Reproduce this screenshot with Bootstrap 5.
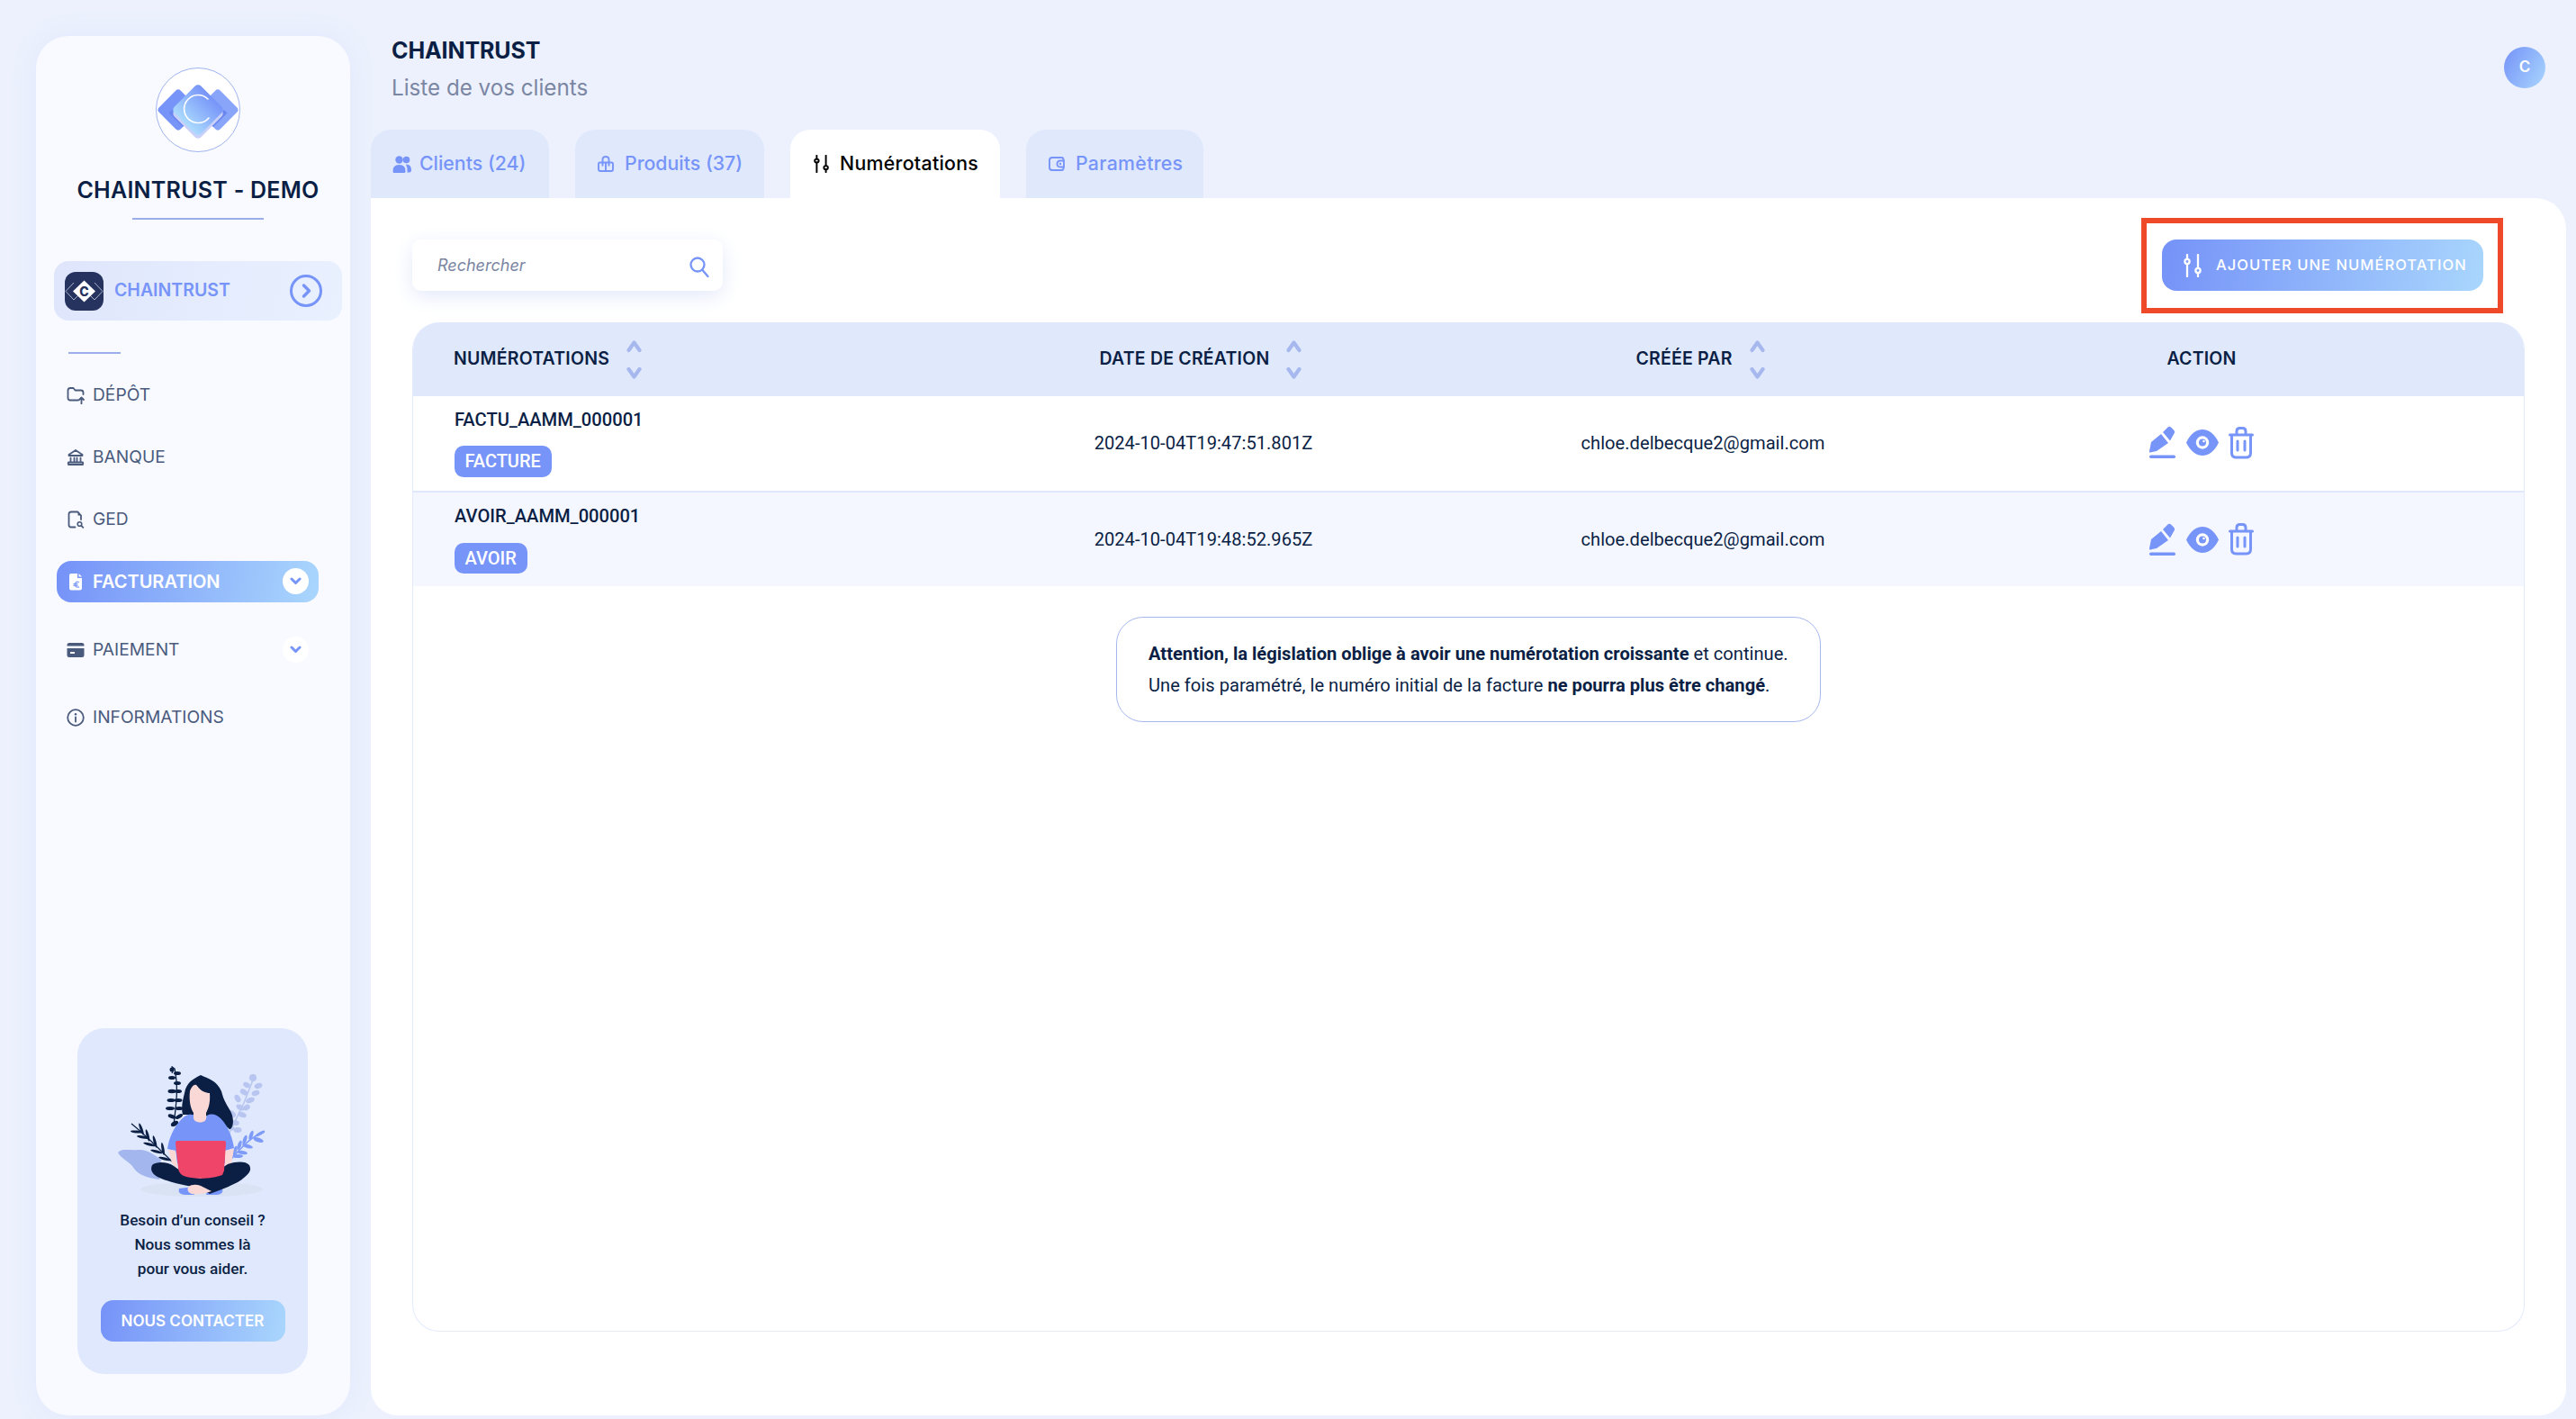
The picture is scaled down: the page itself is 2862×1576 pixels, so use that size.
<!doctype html>
<html lang="fr">
<head>
<meta charset="utf-8">
<title>Chaintrust</title>
<link href="https://cdn.jsdelivr.net/npm/bootstrap@5.3.0/dist/css/bootstrap.min.css" rel="stylesheet">
<style>
:root{--accent:#7794f8;--navy:#0b1f45;--grad:linear-gradient(100deg,#7592f8,#a9d6fd);--pale:#e0e9fc}
html,body{height:1576px;overflow:hidden}
body{background:#ecf1fd;font-family:"Inter","Liberation Sans",sans-serif;color:var(--navy)}
.shell{height:1576px}
/* sidebar */
.side{width:349px;flex:none;margin:40px 0 4px 40px;padding-top:35px;background:#f9faff;border-radius:36px;box-shadow:0 0 30px #e1e8fb}
.side-brand{padding-left:11px}
.side-logo{width:94px;height:94px;display:block;margin:0 auto}
.side-title{margin:23px 0 0;font-size:25px;line-height:39px;font-weight:600;text-align:center;letter-spacing:.25px;color:var(--navy)}
.side-rule{height:2px;background:#9aaeea;width:146px;margin:11px auto 0}
.org{margin:46px 9px 0 20px;height:66px;padding:0 22px 0 12px;border-radius:16px;background:linear-gradient(100deg,#dfe6fc,#e9f1ff);color:var(--accent);font-size:19.5px;font-weight:600;letter-spacing:0}
.org-pic{width:43px;height:43px;border-radius:12px;background:#27335f;flex:none;margin-right:12px;display:block}
.org-go{width:36px;height:36px;margin-left:auto;display:block}
.side-sep{width:58px;height:2px;background:#9aaeea;margin:35px 0 0 36px}
.side-nav{margin:22.5px 0 0 23px;width:291px;gap:23px}
.side-item{height:46px;padding:0 11.5px 0 11px;gap:9px;font-size:19.2px;color:#4a5a7d;border-radius:16px;text-decoration:none}
.side-item svg.ico{width:20px;height:20px;flex:none}
.side-item.on{background:var(--grad);color:#fff;font-weight:600;font-size:20px}
.side-item.low1{margin-top:7px}
.side-item.low2{margin-top:6px}
.chev{width:29px;height:29px;margin-left:auto;background:#fff;border-radius:50%;flex:none}
.chev svg{width:13px;height:9px}
.help{width:256px;height:384px;margin:auto 0 46px 46px;padding-top:28px;background:#dfe8fc;border-radius:30px;text-align:center}
.help-art{width:190px;height:170px;display:block;margin:0 auto}
.help-txt{margin:2px 0 0;font:500 17.2px/27px "Roboto",sans-serif;color:var(--navy)}
.help-btn{width:205px;height:46px;margin-top:21px;padding:0;border:0;border-radius:14px;background:var(--grad);color:#fff;font-size:17px;font-weight:600;line-height:46px}
/* main */
.main{flex:1 1 0;min-width:0;margin-left:23px;margin-right:11px}
.head{height:144px;padding:38px 23px 0 23px}
.head-title{margin:0;font-size:25px;line-height:36px;font-weight:700;letter-spacing:-.1px;color:var(--navy)}
.head-sub{margin:6px 0 0;font-size:24.2px;line-height:36px;color:#7b86a3}
.avatar{width:46px;height:46px;margin-top:14px;border-radius:50%;background:linear-gradient(120deg,#7592f8,#a9d6fd);color:#fff;font-size:17px;font-weight:600}
.tabs{gap:29px;height:76px}
.tab-a{height:76px;flex:none;border-radius:22px 22px 0 0;background:var(--pale);color:var(--accent);font-size:21.3px;font-weight:500;text-decoration:none}
.tab-a svg{flex:none;display:block}
.tab-a.on{background:#fff;color:#000}
.tab-c{width:198px;padding-left:24px;gap:9px}
.tab-p{width:210px;padding-left:25px;gap:12px}
.tab-n{width:233px;padding-left:26px;gap:12px;letter-spacing:.3px}
.tab-r{width:197px;padding-left:25px;gap:12px;letter-spacing:.3px}
.panel{height:1352px;padding:46px 46px 0;background:#fff;border-radius:0 34px 30px 30px}
.search{width:345px;height:57px;border-radius:10px;background:#fff;box-shadow:0 6px 22px #e3e9fa;padding:0 15px 0 28px}
.search input{border:0;padding:0;height:40px;background:transparent;font-style:italic;font-size:18px;color:#7b86a3;box-shadow:none}
.search input::placeholder{color:#7b86a3;opacity:1}
.search svg{width:22px;height:23px;flex:none;margin-top:3px}
.add-wrap{margin-right:46px}
.add-btn{width:357px;height:57px;padding:0 0 0 24px;gap:16px;border:0;border-radius:16px;background:var(--grad);color:#fff;font-size:16.5px;font-weight:500;letter-spacing:1.05px}
.add-btn svg{width:20px;height:26px;flex:none}
.add-btn:hover{color:#fff;background:var(--grad)}
.callout{position:absolute;left:-23px;right:-22px;top:-24px;bottom:-25px;border:6px solid #ee4a2a;pointer-events:none}
.sheet{height:1121px;margin-top:35px;border:1px solid #e3eafc;border-top:0;border-radius:30px;overflow:hidden}
.num-table{table-layout:fixed;width:100%;margin:0}
.num-table.table>:not(caption)>*>*{padding:0;border-bottom:0;background:transparent;box-shadow:none;color:var(--navy)}
.num-table.table>thead>tr>th{height:82px;background:var(--pale);font-size:19.5px;font-weight:600;text-align:center;vertical-align:middle;letter-spacing:.2px}
.num-table.table>thead>tr>th:first-child{text-align:left;padding-left:45px}
.num-table.table>tbody>tr>td{font:400 20.15px/26px "Roboto",sans-serif;text-align:center;vertical-align:middle}
.num-table.table>tbody>tr>td:first-child{text-align:left;padding-left:46px;font-weight:500;vertical-align:top}
.num-table.table>tbody>tr>td:last-child,.num-table.table>thead>tr>th:last-child{padding-right:23px}
.num-table.table>tbody>tr.r1>td{height:106px;border-bottom:2px solid var(--pale)}
.num-table.table>tbody>tr.r1>td:not(:first-child){padding-bottom:2px}
.num-table.table>tbody>tr.r2>td{height:105px;background:#f4f7ff}
.w1{width:542px}.w2{width:672px}.w3{width:438px}
.th-in{gap:19px;padding-right:6px}
.sorter{width:17px;height:45px;display:block;flex:none}
.num-name{padding-top:13px}
.num-tag{display:inline-block;margin-top:16px;height:35px;padding:0 12px 0 11.5px;border-radius:10px;background:var(--accent);color:#fff;font:500 20px/35px "Roboto",sans-serif}
.num-tag.t2{height:34px;line-height:34px;margin-top:17px}
.acts{gap:11px}
.acts svg{display:block;flex:none}
.note{width:783px;height:117px;margin:34px auto 0;padding:0 35px;border:1px solid #a6b8ee;border-radius:30px;font:400 20.15px/35px "Roboto",sans-serif;color:var(--navy)}
.note b{font-weight:700}
</style>
</head>
<body>
<svg width="0" height="0" class="position-absolute">
  <defs>
    <linearGradient id="lg" x1="0.5" y1="0" x2="0.5" y2="1"><stop offset="0" stop-color="#7794f8"/><stop offset="1" stop-color="#aadafe"/></linearGradient>
    <symbol id="down" viewBox="0 0 13 9"><path d="M2 2l4.500 4.500L11 2" fill="none" stroke="#7794f8" stroke-width="3" stroke-linecap="round" stroke-linejoin="round"/></symbol>
    <symbol id="sort" viewBox="0 0 17 45"><path d="M2.500 12L8.500 3.500l6 8.500M2.500 33L8.500 41.500l6-8.500" fill="none" stroke="#a6b8ee" stroke-width="4.200" stroke-linecap="round" stroke-linejoin="round"/></symbol>
    <symbol id="sliders" viewBox="0 0 20 26"><g fill="none" stroke="currentColor" stroke-width="2.300" stroke-linecap="round"><path d="M4 1v5M4 11v14M16 1v15M16 21v4"/><circle cx="4" cy="8.500" r="2.600"/><circle cx="16" cy="18.500" r="2.600"/></g></symbol>
    <symbol id="pen" viewBox="0 0 30 37"><path fill="#7794f8" d="M13 9l8 10-13 9-7 1.500q-1.500 0-1-1.500l2-10zM15 7l5-5q2-2 4-.5l3 3q2 2 .5 4L23 16.500z"/><rect y="32.500" width="29" height="3.500" rx="1.700" fill="#7794f8"/></symbol>
    <symbol id="eye" viewBox="0 0 36 29"><path fill="#7794f8" d="M0 14.500C5 4 12 0 18 0s13 4 18 14.500C31 25 24 29 18 29S5 25 0 14.500z"/><circle cx="18" cy="14.500" r="7.200" fill="#fff"/><circle cx="18" cy="14.500" r="4" fill="#7794f8"/><circle cx="19.500" cy="13" r="1.300" fill="#fff"/></symbol>
    <symbol id="trash" viewBox="0 0 28 36"><g fill="none" stroke="#7794f8" stroke-width="3" stroke-linecap="round" stroke-linejoin="round"><path d="M1.500 9h25M9 8V5q0-3.500 3.500-3.500h3Q19 1.500 19 5v3M3.500 10v19q0 5 5 5h11q5 0 5-5V10M10 16v10M18 16v10"/></g></symbol>
  </defs>
</svg>
<div class="shell d-flex">
  <aside class="side d-flex flex-column">
    <div class="side-brand">
      <svg class="side-logo" viewBox="0 0 94 94">
        <circle cx="47" cy="47" r="46.500" fill="#fff" stroke="#9fb3ee" stroke-width="1"/>
        <rect x="8" y="30" width="34" height="34" rx="4" transform="rotate(45 25 47)" fill="#7794f8"/>
        <rect x="52" y="30" width="34" height="34" rx="4" transform="rotate(45 69 47)" fill="#88a5f9"/>
        <path d="M18 47L33.500 62.500 30 66 14.500 50.500zM76 47L60.500 62.500 64 66 79.500 50.500z" fill="#6a86ef"/>
        <rect x="26" y="30" width="42" height="42" rx="5" transform="rotate(45 47 51)" fill="#c9d0f9"/>
        <rect x="26" y="26" width="42" height="42" rx="5" transform="rotate(45 47 47)" fill="url(#lg)"/>
        <path d="M58 35A15.500 15.500 0 1 0 59 56" fill="none" stroke="#fff" stroke-width="1.600" stroke-linecap="round"/>
      </svg>
      <h1 class="side-title">CHAINTRUST - DEMO</h1>
      <div class="side-rule"></div>
    </div>
    <div class="org d-flex align-items-center">
      <svg class="org-pic" viewBox="0 0 43 43">
        <g fill="none" stroke="#aab3cf" stroke-width="1"><path d="M10 12L1 21.500 10 31l6-6M33 12l9 9.500L33 31l-6-6"/></g>
        <path d="M21.500 9.500L34 21.500 21.500 33.500 9 21.500z" fill="#fff"/>
        <text x="21.500" y="26.500" text-anchor="middle" font-family="Inter" font-weight="800" font-size="14" fill="#27335f">C</text>
      </svg>
      <span>CHAINTRUST</span>
      <svg class="org-go" viewBox="0 0 36 36"><circle cx="18" cy="18" r="16.500" fill="none" stroke="#7794f8" stroke-width="3"/><path d="M15.500 12l6 6-6 6" fill="none" stroke="#7794f8" stroke-width="3.500" stroke-linecap="round" stroke-linejoin="round"/></svg>
    </div>
    <div class="side-sep"></div>
    <nav class="nav flex-column side-nav">
      <a class="side-item d-flex align-items-center" href="#">
        <svg class="ico" viewBox="0 0 20 20"><path d="M13 15.500H4q-2.500 0-2.500-2.500V4.500Q1.500 2 4 2h3.500l2 2.500H16q2.500 0 2.500 2.500v2" fill="none" stroke="#4a5a7d" stroke-width="1.800" stroke-linecap="round" stroke-linejoin="round"/><path d="M16.500 19.500v-6M14 15l2.500-2.500L19 15" fill="none" stroke="#4a5a7d" stroke-width="1.800" stroke-linecap="round" stroke-linejoin="round"/></svg>
        <span>DÉPÔT</span>
      </a>
      <a class="side-item d-flex align-items-center" href="#">
        <svg class="ico" viewBox="0 0 20 20"><g fill="none" stroke="#4a5a7d" stroke-width="1.800" stroke-linejoin="round" stroke-linecap="round"><path d="M2.500 7L10 2l7.500 5v1h-15zM4.500 10.500v4M8.500 10.500v4M11.500 10.500v4M15.500 10.500v4M2 15.500h16q.5 1 0 2.500H2q-.5-1.500 0-2.500z"/></g></svg>
        <span>BANQUE</span>
      </a>
      <a class="side-item d-flex align-items-center" href="#">
        <svg class="ico" viewBox="0 0 20 20"><path d="M9.500 18.500H5q-2.500 0-2.500-2.500V4Q2.500 1.500 5 1.500h7.500L16 5.500V10" fill="none" stroke="#4a5a7d" stroke-width="1.800" stroke-linecap="round" stroke-linejoin="round"/><path d="M12.500 1.500v4H16z" fill="#4a5a7d"/><circle cx="14.500" cy="15" r="2.300" fill="none" stroke="#4a5a7d" stroke-width="1.600"/><path d="M16.300 16.800l2 2" stroke="#4a5a7d" stroke-width="1.800" stroke-linecap="round"/></svg>
        <span>GED</span>
      </a>
      <a class="side-item on d-flex align-items-center" href="#">
        <svg class="ico" viewBox="0 0 20 20"><path d="M5 1h7v5h5v11q0 2.500-2.500 2.500h-9.500Q3 19.500 3 17V3q0-2 2-2zM13.500 1L17 4.500h-3.500z" fill="#fff"/><path d="M13.500 10.500q-3-1.500-4 2-1 4 4 3.500M8 12.500h4M8 14.300h4" fill="none" stroke="#7f9bf9" stroke-width="1.300" stroke-linecap="round"/></svg>
        <span>FACTURATION</span>
        <span class="chev d-flex align-items-center justify-content-center"><svg><use href="#down"/></svg></span>
      </a>
      <a class="side-item low1 d-flex align-items-center" href="#">
        <svg class="ico" viewBox="0 0 20 20"><path d="M3 2h14q2.500 0 2.500 2.500v1H.5v-1Q.5 2 3 2zM.5 8h19v7.500q0 2.500-2.500 2.500H3q-2.500 0-2.500-2.500zM4 12v2h5v-2z" fill="#4a5a7d" fill-rule="evenodd"/></svg>
        <span>PAIEMENT</span>
        <span class="chev d-flex align-items-center justify-content-center"><svg><use href="#down"/></svg></span>
      </a>
      <a class="side-item low2 d-flex align-items-center" href="#">
        <svg class="ico" viewBox="0 0 20 20"><circle cx="10" cy="10" r="8.800" fill="none" stroke="#4a5a7d" stroke-width="1.800"/><circle cx="10" cy="6.300" r="1.200" fill="#4a5a7d"/><path d="M10 9.500v5" stroke="#4a5a7d" stroke-width="1.800" stroke-linecap="round"/></svg>
        <span>INFORMATIONS</span>
      </a>
    </nav>
    <div class="help">
      <svg class="help-art" viewBox="0 0 190 170">
        <ellipse cx="105" cy="151" rx="68" ry="8" fill="#d9e3f3"/>
        <path d="M12 110C16 105 26 108 34 107C44 106 52 112 60 118C58 128 60 134 58 140C46 138 36 136 30 128C26 120 16 118 12 110Z" fill="#a3b7ee"/>
        <g fill="#b7c5f0">
          <path d="M163 27L152 55 135 90" fill="none" stroke="#b7c5f0" stroke-width="1.500"/>
          <circle cx="162" cy="27" r="4"/>
          <ellipse cx="168" cy="36" rx="4.500" ry="3" transform="rotate(-20 168 36)"/><ellipse cx="155" cy="35" rx="4" ry="2.800" transform="rotate(30 155 35)"/>
          <ellipse cx="165" cy="44" rx="4.500" ry="3" transform="rotate(-20 165 44)"/><ellipse cx="152" cy="43" rx="4.500" ry="3" transform="rotate(30 152 43)"/>
          <ellipse cx="159" cy="52" rx="5" ry="3" transform="rotate(-20 159 52)"/><ellipse cx="145" cy="50" rx="4.500" ry="3" transform="rotate(60 145 50)"/>
          <ellipse cx="148" cy="60" rx="5" ry="3" transform="rotate(30 148 60)"/><ellipse cx="155" cy="60" rx="4" ry="3" transform="rotate(-30 155 60)"/>
          <ellipse cx="150" cy="68" rx="5" ry="3" transform="rotate(20 150 68)"/><ellipse cx="139" cy="67" rx="4.500" ry="3" transform="rotate(40 139 67)"/>
          <ellipse cx="142" cy="77" rx="5" ry="3" transform="rotate(10 142 77)"/><ellipse cx="137" cy="82" rx="5" ry="3" transform="rotate(30 137 82)"/>
          <ellipse cx="145" cy="85" rx="4.500" ry="3"/>
        </g>
        <g fill="#7f9bf8">
          <path d="M175 87C160 92 150 104 138 117" fill="none" stroke="#7f9bf8" stroke-width="1.500"/>
          <ellipse cx="168" cy="96" rx="6" ry="2.500" transform="rotate(20 168 96)"/><ellipse cx="160" cy="91" rx="5.500" ry="2" transform="rotate(-70 160 91)"/>
          <ellipse cx="156" cy="103" rx="6" ry="2" transform="rotate(15 156 103)"/><ellipse cx="153" cy="96" rx="5.500" ry="2" transform="rotate(-70 153 96)"/>
          <ellipse cx="150" cy="110" rx="6" ry="2" transform="rotate(10 150 110)"/><ellipse cx="147" cy="102" rx="5.500" ry="2" transform="rotate(-70 147 102)"/>
          <ellipse cx="145" cy="114" rx="6" ry="2"/><ellipse cx="142" cy="108" rx="5.500" ry="2" transform="rotate(-70 142 108)"/>
          <ellipse cx="170" cy="89" rx="6" ry="1.800" transform="rotate(-30 170 89)"/>
        </g>
        <g fill="#0b1f45">
          <path d="M72 22C76 16 68 12 75 17C80 40 76 60 74 80" fill="none" stroke="#0b1f45" stroke-width="1.300"/>
          <circle cx="72" cy="18" r="2.500"/>
          <ellipse cx="72" cy="27" rx="4" ry="2"/><ellipse cx="78" cy="22" rx="4" ry="2"/>
          <ellipse cx="78" cy="33" rx="4" ry="2"/><ellipse cx="72" cy="42" rx="4.500" ry="2.200"/><ellipse cx="79" cy="42" rx="4" ry="2"/>
          <ellipse cx="71" cy="52" rx="4.500" ry="2"/><ellipse cx="79" cy="52" rx="4.500" ry="2"/>
          <ellipse cx="70" cy="61" rx="5" ry="2"/><ellipse cx="80" cy="61" rx="4.500" ry="2"/>
          <ellipse cx="72" cy="70" rx="4.500" ry="2.200" transform="rotate(20 72 70)"/><ellipse cx="80" cy="70" rx="4.500" ry="2" transform="rotate(-30 80 70)"/>
          <ellipse cx="75" cy="78" rx="4.500" ry="2.500" transform="rotate(-30 75 78)"/>
        </g>
        <g fill="#0b1f45">
          <path d="M27 78C42 90 56 104 72 120" fill="none" stroke="#0b1f45" stroke-width="1.300"/>
          <ellipse cx="33" cy="87" rx="7" ry="1.500" transform="rotate(5 33 87)"/><ellipse cx="38" cy="84" rx="7" ry="1.500" transform="rotate(70 38 84)"/>
          <ellipse cx="40" cy="93" rx="7" ry="1.500" transform="rotate(10 40 93)"/><ellipse cx="45" cy="91" rx="7" ry="1.500" transform="rotate(75 45 91)"/>
          <ellipse cx="47" cy="101" rx="7" ry="1.500" transform="rotate(15 47 101)"/><ellipse cx="53" cy="98" rx="7" ry="1.500" transform="rotate(75 53 98)"/>
          <ellipse cx="55" cy="109" rx="7" ry="1.500" transform="rotate(15 55 109)"/><ellipse cx="62" cy="106" rx="7" ry="1.500" transform="rotate(80 62 106)"/>
          <ellipse cx="64" cy="117" rx="7" ry="1.500" transform="rotate(15 64 117)"/>
        </g>
        <path d="M104 24C112 28 122 30 127 42C130 54 134 58 138 66C142 76 139 84 136 84L120 70 88 68 84 68C82 60 84 52 86 44C88 32 96 28 104 24Z" fill="#0b1f45"/>
        <path d="M80 150Q78 156 86 157L97 157 97 148zM128 150Q130 156 122 157L110 157 112 148z" fill="#7794f8"/>
        <path d="M86 70C92 66 97 68 97 70C99 77 109 77 111 69C116 66 122 68 126 72C134 80 139 92 141 105L131 108 131 122 78 122 76 108 67 106C69 92 76 78 86 70Z" fill="#7794f8"/>
        <path d="M92 42C94 36 98 33 100 36C104 42 110 44 114 44C115 56 112 62 110 66L110 72C110 78 97 78 96 72L96 66C92 60 91 50 92 42Z" fill="#f9d8d6"/>
        <path d="M68 107L76 108 78 130 72 122zM131 108L141 106 138 122 131 130z" fill="#f9d8d6"/>
        <path d="M50 124C56 119 68 121 74 125C82 131 90 136 115 142L112 153C96 147 80 146 66 141C56 138 46 133 50 124Z" fill="#0b1f45"/>
        <path d="M158 124C154 119 142 120 134 123C126 128 118 136 92 142L114 156C130 150 146 144 152 138C160 132 160 128 158 124Z" fill="#0b1f45"/>
        <path d="M90 148Q96 144 104 147L116 153Q104 157 94 156Q88 154 90 148Z" fill="#f9d8d6"/>
        <path d="M78 97Q76 97 76 100L79 128Q80 135 88 137C100 140 118 139 128 135L130 130 132 100Q132 97 130 97Z" fill="#ee4569"/>
      </svg>
      <p class="help-txt">Besoin d’un conseil ?<br>Nous sommes là<br>pour vous aider.</p>
      <button class="btn help-btn" type="button">NOUS CONTACTER</button>
    </div>
  </aside>
  <main class="main d-flex flex-column">
    <header class="head d-flex justify-content-between align-items-start">
      <div>
        <h2 class="head-title">CHAINTRUST</h2>
        <p class="head-sub">Liste de vos clients</p>
      </div>
      <div class="avatar d-flex align-items-center justify-content-center">C</div>
    </header>
    <div class="tabs d-flex">
      <a class="tab-a tab-c d-flex align-items-center" href="#">
        <svg width="21" height="19" viewBox="0 0 21 19"><circle cx="7.500" cy="4.500" r="4.200" fill="#7794f8"/><circle cx="15.500" cy="4.500" r="3.800" fill="#7794f8"/><path d="M.5 17.500q-.5-7.500 7-7.500t7 7.500q0 1.500-1.500 1.500H2q-1.500 0-1.500-1.500zM15 9.500q6 0 6 6 0 3-2 3h-2.500q.5-5-1.500-9z" fill="#7794f8"/></svg>
        <span>Clients (24)</span>
      </a>
      <a class="tab-a tab-p d-flex align-items-center" href="#">
        <svg width="18" height="18" viewBox="0 0 18 18"><g fill="none" stroke="#7794f8" stroke-width="1.900" stroke-linejoin="round"><path d="M2.500 7.500h13q1.500 0 1.500 1.500v6q0 2-2 2H3q-2 0-2-2V9q0-1.500 1.500-1.500zM5.500 7.500V4q0-3 3.500-3t3.500 3v3.500M5.500 7.500v4M12.500 7.500v4M9 7.500v9.500"/></g></svg>
        <span>Produits (37)</span>
      </a>
      <a class="tab-a tab-n on d-flex align-items-center" href="#">
        <svg width="17" height="20" viewBox="0 0 20 26" preserveAspectRatio="none"><use href="#sliders"/></svg>
        <span>Numérotations</span>
      </a>
      <a class="tab-a tab-r d-flex align-items-center" href="#">
        <svg width="18" height="16" viewBox="0 0 18 16"><g fill="none" stroke="#7794f8" stroke-width="1.900"><path d="M16.500 4V3q0-2-2-2H4Q1 1 1 4v8q0 3 3 3h10.500q2 0 2-2v-1"/><path d="M17 4.500h-4q-3.500 0-3.500 3.500t3.500 3.500h4z"/></g><circle cx="13" cy="8" r="1.200" fill="#7794f8"/></svg>
        <span>Paramètres</span>
      </a>
    </div>
    <section class="panel">
      <div class="d-flex justify-content-between align-items-start">
        <div class="search d-flex align-items-center">
          <input class="form-control" type="text" placeholder="Rechercher" aria-label="Rechercher">
          <svg viewBox="0 0 22 23"><circle cx="9" cy="9" r="7.500" fill="none" stroke="#7794f8" stroke-width="2.300"/><path d="M14.500 15l6 7" stroke="#7794f8" stroke-width="2.300" stroke-linecap="round"/></svg>
        </div>
        <div class="add-wrap position-relative">
          <button class="btn add-btn d-flex align-items-center" type="button">
            <svg viewBox="0 0 20 26"><use href="#sliders"/></svg>
            <span>AJOUTER UNE NUMÉROTATION</span>
          </button>
          <div class="callout"></div>
        </div>
      </div>
      <div class="sheet">
        <table class="table num-table">
          <colgroup><col class="w1"><col class="w2"><col class="w3"><col></colgroup>
          <thead>
            <tr>
              <th><span class="th-in d-inline-flex align-items-center">NUMÉROTATIONS<svg class="sorter"><use href="#sort"/></svg></span></th>
              <th><span class="th-in d-inline-flex align-items-center">DATE DE CRÉATION<svg class="sorter"><use href="#sort"/></svg></span></th>
              <th><span class="th-in d-inline-flex align-items-center">CRÉÉE PAR<svg class="sorter"><use href="#sort"/></svg></span></th>
              <th>ACTION</th>
            </tr>
          </thead>
          <tbody>
            <tr class="r1">
              <td><div class="num-name">FACTU_AAMM_000001</div><span class="num-tag">FACTURE</span></td>
              <td>2024-10-04T19:47:51.801Z</td>
              <td>chloe.delbecque2@gmail.com</td>
              <td><div class="acts d-flex justify-content-center align-items-center">
                <svg width="30" height="37"><use href="#pen"/></svg><svg width="36" height="29"><use href="#eye"/></svg><svg width="28" height="36"><use href="#trash"/></svg>
              </div></td>
            </tr>
            <tr class="r2">
              <td><div class="num-name">AVOIR_AAMM_000001</div><span class="num-tag t2">AVOIR</span></td>
              <td>2024-10-04T19:48:52.965Z</td>
              <td>chloe.delbecque2@gmail.com</td>
              <td><div class="acts d-flex justify-content-center align-items-center">
                <svg width="30" height="37"><use href="#pen"/></svg><svg width="36" height="29"><use href="#eye"/></svg><svg width="28" height="36"><use href="#trash"/></svg>
              </div></td>
            </tr>
          </tbody>
        </table>
        <div class="note d-flex flex-column justify-content-center">
          <div><b>Attention, la législation oblige à avoir une numérotation croissante</b> et continue.</div>
          <div>Une fois paramétré, le numéro initial de la facture <b>ne pourra plus être changé</b>.</div>
        </div>
      </div>
    </section>
  </main>
</div>
</body>
</html>
